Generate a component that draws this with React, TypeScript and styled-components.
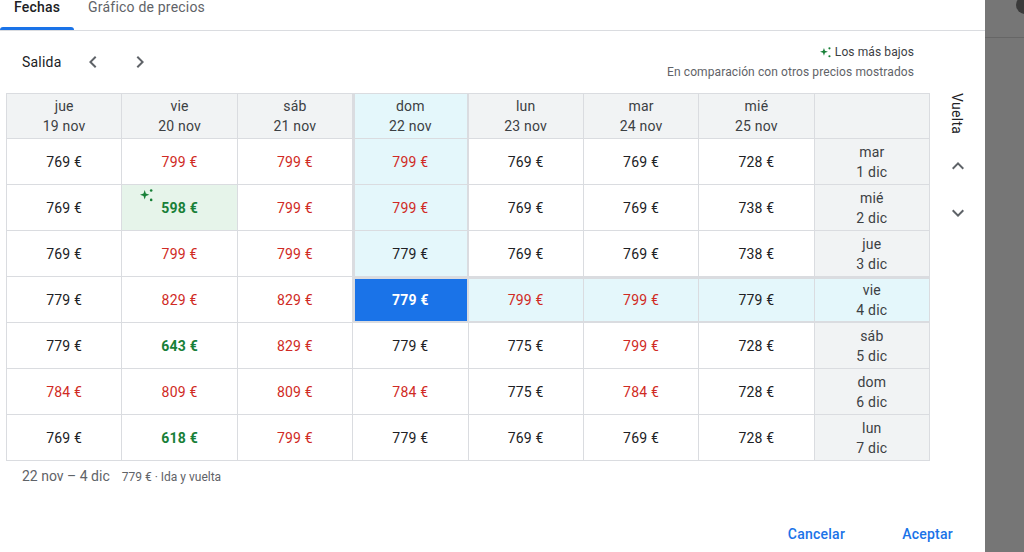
import React from 'react';
import styled, { createGlobalStyle, css } from 'styled-components';

const GlobalStyle = createGlobalStyle`
  html, body { margin: 0; padding: 0; background: #fff; }
  body { font-family: Roboto, "Noto Sans", Arial, sans-serif; color: #202124; }
  * { box-sizing: border-box; }
`;

type Tone = 'normal' | 'red' | 'green';

interface Price {
  value: number;
  tone: Tone;
}

const columns = [
  ['jue', '19 nov'],
  ['vie', '20 nov'],
  ['sáb', '21 nov'],
  ['dom', '22 nov'],
  ['lun', '23 nov'],
  ['mar', '24 nov'],
  ['mié', '25 nov'],
];

const rowHeads = [
  ['mar', '1 dic'],
  ['mié', '2 dic'],
  ['jue', '3 dic'],
  ['vie', '4 dic'],
  ['sáb', '5 dic'],
  ['dom', '6 dic'],
  ['lun', '7 dic'],
];

const n = (value: number): Price => ({ value, tone: 'normal' });
const r = (value: number): Price => ({ value, tone: 'red' });
const g = (value: number): Price => ({ value, tone: 'green' });

const prices: Price[][] = [
  [n(769), r(799), r(799), r(799), n(769), n(769), n(728)],
  [n(769), g(598), r(799), r(799), n(769), n(769), n(738)],
  [n(769), r(799), r(799), n(779), n(769), n(769), n(738)],
  [n(779), r(829), r(829), n(779), r(799), r(799), n(779)],
  [n(779), g(643), r(829), n(779), n(775), r(799), n(728)],
  [r(784), r(809), r(809), r(784), n(775), r(784), n(728)],
  [n(769), g(618), r(799), n(779), n(769), n(769), n(728)],
];

const SEL_COL = 3;
const SEL_ROW = 3;
const LOWEST = { row: 1, col: 1 };

const Page = styled.div`
  display: flex;
  width: 1024px;
  height: 552px;
  overflow: hidden;
`;

const Dialog = styled.div`
  width: 985px;
  flex-shrink: 0;
  display: flex;
  flex-direction: column;
  background: #fff;
  & > * { flex-shrink: 0; }
`;

const Scrim = styled.div`
  flex: 1;
  background: #767676;
  position: relative;
`;

const ScrimBar = styled.div`
  height: 38px;
  border-bottom: 1px solid #666;
`;

const ScrimDot = styled.div`
  position: absolute;
  top: -4px;
  right: -10px;
  width: 18px;
  height: 18px;
  border-radius: 50%;
  background: #3a3a3a;
`;

const TabBar = styled.div`
  display: flex;
  height: 31px;
  border-bottom: 1px solid #dadce0;
`;

const Tab = styled.div<{ $active?: boolean }>`
  position: relative;
  padding: 0 14px;
  height: 30px;
  font-size: 14px;
  line-height: 16px;
  margin-top: -1px;
  color: ${p => (p.$active ? '#202124' : '#5f6368')};
  font-weight: ${p => (p.$active ? 500 : 400)};
  letter-spacing: 0.2px;
  ${p =>
    p.$active &&
    css`
      &::after {
        content: '';
        position: absolute;
        left: 0;
        right: 0;
        bottom: -1px;
        height: 3px;
        background: #1a73e8;
        border-radius: 3px 3px 0 0;
      }
    `}
`;

const Toolbar = styled.div`
  height: 62px;
  display: flex;
  align-items: center;
  padding: 0 71px 0 22px;
`;

const Label = styled.div`
  font-size: 14px;
  color: #202124;
  margin-right: 14px;
  letter-spacing: 0.2px;
`;

const IconButton = styled.div`
  width: 36px;
  height: 36px;
  display: flex;
  align-items: center;
  justify-content: center;
  color: #5f6368;
  & + & { margin-left: 11px; }
`;

const Legend = styled.div`
  margin-left: auto;
  display: flex;
  flex-direction: column;
  align-items: flex-end;
  font-size: 12px;
  line-height: 20px;
  color: #5f6368;
  letter-spacing: 0.1px;
`;

const LegendTitle = styled.div`
  display: flex;
  align-items: center;
  gap: 4px;
  color: #3c4043;
`;

const Body = styled.div`
  display: flex;
  padding-left: 6px;
`;

const Grid = styled.div`
  width: 924px;
  display: grid;
  grid-template-columns: repeat(8, 1fr);
  grid-template-rows: 45px repeat(7, 46px);
  border-top: 1px solid #dadce0;
  border-left: 1px solid #dadce0;
`;

interface CellProps {
  $bg?: string;
  $edges?: string;
}

const edgeShadow = (edges = '') => {
  const list: string[] = [];
  if (edges.includes('l')) list.push('inset 2px 0 0 #dadce0');
  if (edges.includes('r')) list.push('inset -1px 0 0 #dadce0');
  if (edges.includes('t')) list.push('inset 0 2px 0 #dadce0');
  if (edges.includes('b')) list.push('inset 0 -1px 0 #dadce0');
  return list.length ? list.join(', ') : 'none';
};

const Cell = styled.div<CellProps>`
  display: flex;
  align-items: center;
  justify-content: center;
  border-right: 1px solid #dadce0;
  border-bottom: 1px solid #dadce0;
  background: ${p => p.$bg || '#fff'};
  box-shadow: ${p => edgeShadow(p.$edges)};
`;

const HeadCell = styled(Cell)`
  flex-direction: column;
  font-size: 14px;
  line-height: 20px;
  color: #3c4043;
  letter-spacing: 0.2px;
  background: ${p => p.$bg || '#f1f3f4'};
`;

const PriceText = styled.span<{ $tone: Tone; $selected?: boolean }>`
  position: relative;
  font-size: 14px;
  letter-spacing: 0.2px;
  font-weight: ${p => (p.$selected || p.$tone === 'green' ? 700 : 400)};
  color: ${p =>
    p.$selected ? '#fff' : p.$tone === 'red' ? '#d02a24' : p.$tone === 'green' ? '#188038' : '#202124'};
`;

const SparkleBadge = styled.span`
  position: absolute;
  left: -21px;
  top: -11px;
  display: flex;
`;

const Side = styled.div`
  width: 55px;
  display: flex;
  flex-direction: column;
  align-items: center;
`;

const Vertical = styled.div`
  writing-mode: vertical-rl;
  font-size: 14px;
  font-weight: 400;
  color: #202124;
  line-height: 16px;
  height: 44px;
  margin-right: 2px;
  letter-spacing: 0.3px;
`;

const SideButton = styled(IconButton)`
  margin-top: 11px;
  & + & { margin-left: 0; }
`;

const Summary = styled.div`
  display: flex;
  align-items: baseline;
  gap: 12px;
  padding-left: 22px;
  margin-top: 7px;
  line-height: 16px;
`;

const SummaryDates = styled.span`
  font-size: 14px;
  color: #5f6368;
`;

const SummaryPrice = styled.span`
  font-size: 12px;
  color: #5f6368;
`;

const Actions = styled.div`
  display: flex;
  justify-content: flex-end;
  gap: 25px;
  padding-right: 16px;
  margin-top: 31px;
`;

const TextButton = styled.div`
  height: 36px;
  padding: 0 16px;
  display: flex;
  align-items: center;
  font-size: 14px;
  font-weight: 500;
  letter-spacing: 0.25px;
  color: #1a73e8;
`;

const Sparkle = ({ size = 10 }: { size?: number }) => (
  <svg width={size} height={size} viewBox="0 0 10 10" fill="#188038">
    <path d="M3.6 0.8 L4.5 3.5 L7.2 4.4 L4.5 5.3 L3.6 8 L2.7 5.3 L0 4.4 L2.7 3.5 Z" />
    <circle cx="8.6" cy="1.2" r="1" />
    <circle cx="8.6" cy="8.4" r="1" />
  </svg>
);

const Chevron = ({ dir }: { dir: 'left' | 'right' | 'up' | 'down' }) => {
  const rot = { left: 0, up: 90, right: 180, down: 270 }[dir];
  return (
    <svg width="24" height="24" viewBox="0 0 24 24" fill="currentColor" style={{ transform: `rotate(${rot}deg)` }}>
      <path d="M15.41 7.41L14 6l-6 6 6 6 1.41-1.41L10.83 12z" />
    </svg>
  );
};

const CYAN = '#e4f7fb';

const headerBg = (col: number) => (col === SEL_COL ? CYAN : undefined);

const cellBg = (row: number, col: number) => {
  if (row === SEL_ROW && col === SEL_COL) return '#1a73e8';
  if (col === SEL_COL && row < SEL_ROW) return CYAN;
  if (row === SEL_ROW && col > SEL_COL) return CYAN;
  if (row === LOWEST.row && col === LOWEST.col) return '#e6f4ea';
  return undefined;
};

const cellEdges = (row: number, col: number) => {
  let e = '';
  if (col === SEL_COL && row <= SEL_ROW) e += 'lr';
  if (row === SEL_ROW && col >= SEL_COL) e += 'tb';
  return e;
};

export default function App() {
  return (
    <Page>
      <GlobalStyle />
      <Dialog>
        <TabBar>
          <Tab $active>Fechas</Tab>
          <Tab>Gráfico de precios</Tab>
        </TabBar>
        <Toolbar>
          <Label>Salida</Label>
          <IconButton><Chevron dir="left" /></IconButton>
          <IconButton><Chevron dir="right" /></IconButton>
          <Legend>
            <LegendTitle><Sparkle size={11} />Los más bajos</LegendTitle>
            <div>En comparación con otros precios mostrados</div>
          </Legend>
        </Toolbar>
        <Body>
          <Grid>
            {columns.map(([day, date], c) => (
              <HeadCell key={`h${c}`} $bg={headerBg(c)} $edges={c === SEL_COL ? 'lr' : ''}>
                <span>{day}</span>
                <span>{date}</span>
              </HeadCell>
            ))}
            <HeadCell key="corner" />
            {prices.map((row, ri) => (
              <React.Fragment key={`r${ri}`}>
                {row.map((p, ci) => {
                  const selected = ri === SEL_ROW && ci === SEL_COL;
                  return (
                    <Cell key={ci} $bg={cellBg(ri, ci)} $edges={cellEdges(ri, ci)}>
                      <PriceText $tone={p.tone} $selected={selected}>
                        {ri === LOWEST.row && ci === LOWEST.col && (
                          <SparkleBadge><Sparkle size={13} /></SparkleBadge>
                        )}
                        {p.value} €
                      </PriceText>
                    </Cell>
                  );
                })}
                <HeadCell $bg={ri === SEL_ROW ? CYAN : undefined} $edges={ri === SEL_ROW ? 'tb' : ''}>
                  <span>{rowHeads[ri][0]}</span>
                  <span>{rowHeads[ri][1]}</span>
                </HeadCell>
              </React.Fragment>
            ))}
          </Grid>
          <Side>
            <Vertical>Vuelta</Vertical>
            <SideButton><Chevron dir="up" /></SideButton>
            <SideButton><Chevron dir="down" /></SideButton>
          </Side>
        </Body>
        <Summary>
          <SummaryDates>22 nov – 4 dic</SummaryDates>
          <SummaryPrice>779 € · Ida y vuelta</SummaryPrice>
        </Summary>
        <Actions>
          <TextButton>Cancelar</TextButton>
          <TextButton>Aceptar</TextButton>
        </Actions>
      </Dialog>
      <Scrim>
        <ScrimBar />
        <ScrimDot />
      </Scrim>
    </Page>
  );
}
